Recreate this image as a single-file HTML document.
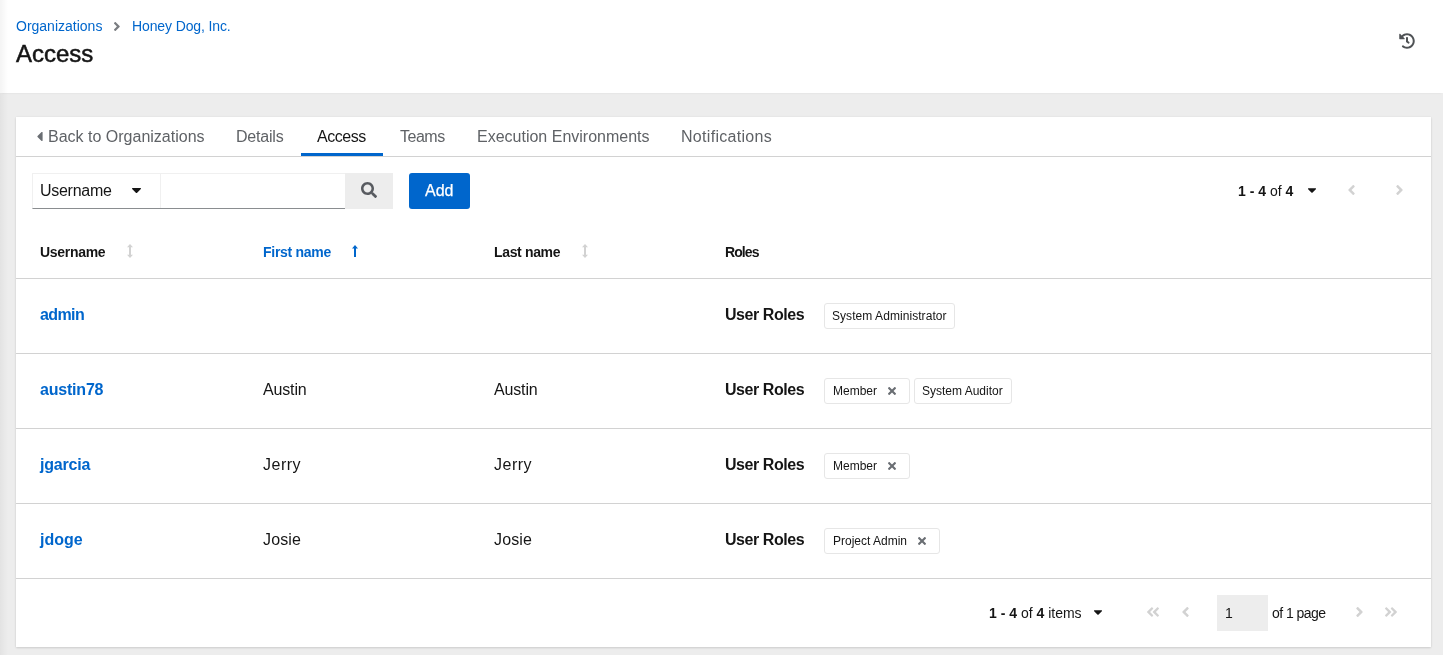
<!DOCTYPE html>
<html><head><meta charset="utf-8">
<style>
*{box-sizing:border-box;margin:0;padding:0}
html,body{width:1443px;height:655px;overflow:hidden;background:#ededed;font-family:"Liberation Sans",sans-serif;color:#151515}
.a{position:absolute;white-space:pre;line-height:1;will-change:transform}
#hdr{position:absolute;left:0;top:0;width:1443px;height:93px;background:#fff;box-shadow:0 2px 2px -2px rgba(3,3,3,.08)}
#lshadow{position:absolute;left:0;top:0;width:8px;height:655px;background:linear-gradient(to right,rgba(0,0,0,.045),rgba(0,0,0,0))}
#card{position:absolute;left:16px;top:117px;width:1415px;height:530px;background:#fff;box-shadow:0 1px 2px rgba(3,3,3,.12),0 0 2px rgba(3,3,3,.06)}
.blue{color:#0066cc}
.grey{color:#5f6266}
svg{position:absolute;display:block}
.hl{position:absolute;left:16px;width:1415px;height:1px;background:#d2d2d2}
.chip{position:absolute;height:26px;border:1px solid #e6e6e6;border-radius:3px;background:#fff}
</style></head><body>
<div id="hdr"></div>
<!-- breadcrumb -->
<div class="a blue" style="left:16px;top:19px;font-size:14px">Organizations</div>
<svg style="left:114px;top:22px" width="6" height="9" viewBox="32 96 200 320"><path fill="#7a7d81" d="M224.3 273l-136 136c-9.4 9.4-24.6 9.4-33.9 0l-22.6-22.6c-9.4-9.4-9.4-24.6 0-33.9l96.4-96.4-96.4-96.4c-9.4-9.4-9.4-24.6 0-33.9L54.3 103c9.4-9.4 24.6-9.4 33.9 0l136 136c9.5 9.4 9.5 24.6.1 34z"/></svg>
<div class="a blue" style="left:132px;top:19px;font-size:14px;letter-spacing:-0.12px">Honey Dog, Inc.</div>
<div class="a" style="left:16px;top:42px;font-size:24px;-webkit-text-stroke:0.5px #151515">Access</div>
<!-- history icon -->
<svg style="left:1399px;top:33px" width="16" height="16" viewBox="0 0 512 512"><path fill="#4f5255" d="M504 255.531c.253 136.64-111.18 248.372-247.82 248.468-59.015.042-113.223-20.53-155.822-54.911-11.077-8.94-11.905-25.541-1.839-35.607l11.267-11.267c8.609-8.609 22.353-9.551 31.891-1.984C173.062 425.135 212.781 440 256 440c101.705 0 184-82.311 184-184 0-101.705-82.311-184-184-184-48.814 0-93.149 18.969-126.068 49.932l50.754 50.754c10.08 10.08 2.941 27.314-11.313 27.314H24c-8.837 0-16-7.163-16-16V38.627c0-14.254 17.234-21.393 27.314-11.314l49.372 49.372C129.209 34.136 189.552 8 256 8c136.81 0 247.747 110.78 248 247.531zm-180.912 78.784l9.823-12.63c8.138-10.463 6.253-25.542-4.21-33.679L288 256.349V152c0-13.255-10.745-24-24-24h-16c-13.255 0-24 10.745-24 24v135.651l65.409 50.874c10.463 8.137 25.541 6.253 33.679-4.21z"/></svg>
<div id="lshadow"></div>
<div id="card"></div>

<!-- tabs -->
<div class="hl" style="top:156px"></div>
<div style="position:absolute;left:301px;top:153px;width:82px;height:3px;background:#0066cc"></div>
<svg style="left:37.4px;top:131.5px" width="6" height="9" viewBox="24 112 168 290"><path fill="#6a6e73" d="M192 127.338v257.324c0 17.818-21.543 26.741-34.142 14.142L29.196 270.142c-7.81-7.81-7.81-20.474 0-28.284l128.662-128.662c12.599-12.6 34.142-3.676 34.142 14.142z"/></svg>
<div class="a grey" style="left:48px;top:129px;font-size:16px">Back to Organizations</div>
<div class="a grey" style="left:236px;top:129px;font-size:16px;letter-spacing:-0.2px">Details</div>
<div class="a" style="left:317px;top:129px;font-size:16px;letter-spacing:-0.45px">Access</div>
<div class="a grey" style="left:400px;top:129px;font-size:16px;letter-spacing:-0.5px">Teams</div>
<div class="a grey" style="left:477px;top:129px;font-size:16px">Execution Environments</div>
<div class="a grey" style="left:681px;top:129px;font-size:16px;letter-spacing:0.3px">Notifications</div>

<!-- toolbar -->
<div style="position:absolute;left:32px;top:173px;width:129px;height:36px;border:1px solid #f0f0f0;border-bottom-color:#8a8d90"></div>
<div class="a" style="left:40px;top:183px;font-size:16px;letter-spacing:-0.28px">Username</div>
<svg style="left:132px;top:188px" width="9" height="5" viewBox="12 192 296 163"><path fill="#151515" d="M31.3 192h257.3c17.8 0 26.7 21.5 14.1 34.1L174.1 354.8c-7.8 7.8-20.5 7.8-28.3 0L17.2 226.1C4.6 213.5 13.5 192 31.3 192z"/></svg>
<div style="position:absolute;left:160px;top:173px;width:185px;height:36px;border:1px solid #f0f0f0;border-left:0;border-right:0;border-bottom-color:#8a8d90"></div>
<div style="position:absolute;left:345px;top:173px;width:48px;height:36px;background:#ededed"></div>
<svg style="left:361px;top:182px" width="16" height="16" viewBox="0 0 512 512"><path fill="#585b60" d="M505 442.7L405.3 343c-4.5-4.5-10.6-7-17-7H372c27.6-35.3 44-79.7 44-128C416 93.1 322.9 0 208 0S0 93.1 0 208s93.1 208 208 208c48.3 0 92.7-16.4 128-44v16.3c0 6.4 2.5 12.5 7 17l99.7 99.7c9.4 9.4 24.6 9.4 33.9 0l28.3-28.3c9.4-9.4 9.4-24.6.1-34zM208 336c-70.7 0-128-57.2-128-128 0-70.7 57.2-128 128-128 70.7 0 128 57.2 128 128 0 70.7-57.2 128-128 128z"/></svg>
<div style="position:absolute;left:409px;top:173px;width:61px;height:36px;background:#0066cc;border-radius:3px"></div>
<div class="a" style="left:425px;top:183px;font-size:16px;color:#fff;-webkit-text-stroke:0.25px #fff">Add</div>

<!-- top pagination -->
<div class="a" style="left:1238px;top:184px;font-size:14px"><b>1 - 4</b> of <b>4</b></div>
<svg style="left:1308px;top:188px" width="8" height="5" viewBox="12 192 296 163"><path fill="#151515" d="M31.3 192h257.3c17.8 0 26.7 21.5 14.1 34.1L174.1 354.8c-7.8 7.8-20.5 7.8-28.3 0L17.2 226.1C4.6 213.5 13.5 192 31.3 192z"/></svg>
<svg style="left:1348px;top:185px" width="7" height="10" viewBox="24 96 208 320"><path fill="#d2d2d2" d="M31.7 239l136-136c9.4-9.4 24.6-9.4 33.9 0l22.6 22.6c9.4 9.4 9.4 24.6 0 33.9L127.9 256l96.4 96.4c9.4 9.4 9.4 24.6 0 33.9L201.7 409c-9.4 9.4-24.6 9.4-33.9 0l-136-136c-9.5-9.4-9.5-24.6-.1-34z"/></svg>
<svg style="left:1396px;top:185px" width="7" height="10" viewBox="24 96 208 320"><path fill="#d2d2d2" d="M224.3 273l-136 136c-9.4 9.4-24.6 9.4-33.9 0l-22.6-22.6c-9.4-9.4-9.4-24.6 0-33.9l96.4-96.4-96.4-96.4c-9.4-9.4-9.4-24.6 0-33.9L54.3 103c9.4-9.4 24.6-9.4 33.9 0l136 136c9.5 9.4 9.5 24.6.1 34z"/></svg>

<!-- table header -->
<div class="a" style="left:40px;top:245px;font-size:14px;font-weight:bold;letter-spacing:-0.3px">Username</div>
<svg style="left:127px;top:244px" width="6" height="14" viewBox="0 0 6 14"><path fill="#d2d2d2" d="M3 0 L6 3.3 L4 3.3 L4 10.7 L6 10.7 L3 14 L0 10.7 L2 10.7 L2 3.3 L0 3.3 Z"/></svg>
<div class="a blue" style="left:263px;top:245px;font-size:14px;font-weight:bold;letter-spacing:-0.28px">First name</div>
<svg style="left:352px;top:245px" width="6" height="12" viewBox="0 0 6 12"><path fill="#0066cc" d="M3 0 L6 3.4 L4 3.4 L4 12 L2 12 L2 3.4 L0 3.4 Z"/></svg>
<div class="a" style="left:494px;top:245px;font-size:14px;font-weight:bold;letter-spacing:-0.35px">Last name</div>
<svg style="left:582px;top:244px" width="6" height="14" viewBox="0 0 6 14"><path fill="#d2d2d2" d="M3 0 L6 3.3 L4 3.3 L4 10.7 L6 10.7 L3 14 L0 10.7 L2 10.7 L2 3.3 L0 3.3 Z"/></svg>
<div class="a" style="left:725px;top:245px;font-size:14px;font-weight:bold;letter-spacing:-0.9px">Roles</div>
<div class="hl" style="top:278px"></div>

<!-- rows -->
<div class="a blue" style="left:40px;top:307px;font-size:16px;font-weight:bold;letter-spacing:-0.6px">admin</div>
<div class="a" style="left:725px;top:307px;font-size:16px;font-weight:bold;letter-spacing:-0.45px">User Roles</div>
<div class="chip" style="left:824px;top:303px;width:131px"></div>
<div class="a" style="left:832px;top:310px;font-size:12px;letter-spacing:0.06px">System Administrator</div>
<div class="hl" style="top:353px"></div>

<div class="a blue" style="left:40px;top:382px;font-size:16px;font-weight:bold;letter-spacing:-0.2px">austin78</div>
<div class="a" style="left:263px;top:382px;font-size:16px;letter-spacing:-0.15px">Austin</div>
<div class="a" style="left:494px;top:382px;font-size:16px;letter-spacing:-0.15px">Austin</div>
<div class="a" style="left:725px;top:382px;font-size:16px;font-weight:bold;letter-spacing:-0.45px">User Roles</div>
<div class="chip" style="left:824px;top:378px;width:86px"></div>
<div class="a" style="left:833px;top:385px;font-size:12px">Member</div>
<svg style="left:888px;top:387px" width="8" height="8" viewBox="0 80 352 352"><path fill="#6a6e73" d="M242.72 256l100.070-100.070c12.280-12.280 12.280-32.190 0-44.480l-22.240-22.240c-12.280-12.280-32.190-12.280-44.480 0L176 189.280 75.930 89.210c-12.280-12.280-32.190-12.280-44.480 0L9.210 111.450c-12.280 12.280-12.280 32.190 0 44.480L109.280 256 9.210 356.070c-12.280 12.280-12.280 32.190 0 44.480l22.240 22.240c12.280 12.280 32.200 12.280 44.480 0L176 322.720l100.070 100.070c12.280 12.280 32.200 12.280 44.480 0l22.240-22.240c12.280-12.280 12.280-32.190 0-44.480L242.720 256z"/></svg>
<div class="chip" style="left:914px;top:378px;width:98px"></div>
<div class="a" style="left:922px;top:385px;font-size:12px">System Auditor</div>
<div class="hl" style="top:428px"></div>

<div class="a blue" style="left:40px;top:457px;font-size:16px;font-weight:bold;letter-spacing:-0.2px">jgarcia</div>
<div class="a" style="left:263px;top:457px;font-size:16px;letter-spacing:0.5px">Jerry</div>
<div class="a" style="left:494px;top:457px;font-size:16px;letter-spacing:0.5px">Jerry</div>
<div class="a" style="left:725px;top:457px;font-size:16px;font-weight:bold;letter-spacing:-0.45px">User Roles</div>
<div class="chip" style="left:824px;top:453px;width:86px"></div>
<div class="a" style="left:833px;top:460px;font-size:12px">Member</div>
<svg style="left:888px;top:462px" width="8" height="8" viewBox="0 80 352 352"><path fill="#6a6e73" d="M242.72 256l100.070-100.070c12.280-12.280 12.280-32.190 0-44.480l-22.240-22.240c-12.280-12.280-32.190-12.280-44.480 0L176 189.280 75.930 89.210c-12.280-12.280-32.190-12.280-44.480 0L9.210 111.450c-12.280 12.280-12.280 32.190 0 44.480L109.280 256 9.210 356.070c-12.280 12.280-12.280 32.190 0 44.480l22.240 22.240c12.280 12.280 32.200 12.280 44.480 0L176 322.720l100.070 100.070c12.280 12.280 32.200 12.280 44.480 0l22.240-22.240c12.280-12.280 12.280-32.190 0-44.480L242.720 256z"/></svg>
<div class="hl" style="top:503px"></div>

<div class="a blue" style="left:40px;top:532px;font-size:16px;font-weight:bold">jdoge</div>
<div class="a" style="left:263px;top:532px;font-size:16px;letter-spacing:0.15px">Josie</div>
<div class="a" style="left:494px;top:532px;font-size:16px;letter-spacing:0.15px">Josie</div>
<div class="a" style="left:725px;top:532px;font-size:16px;font-weight:bold;letter-spacing:-0.45px">User Roles</div>
<div class="chip" style="left:824px;top:528px;width:116px"></div>
<div class="a" style="left:833px;top:535px;font-size:12px">Project Admin</div>
<svg style="left:918px;top:537px" width="8" height="8" viewBox="0 80 352 352"><path fill="#6a6e73" d="M242.72 256l100.070-100.070c12.280-12.280 12.280-32.190 0-44.480l-22.240-22.240c-12.280-12.280-32.190-12.280-44.480 0L176 189.280 75.930 89.210c-12.280-12.280-32.190-12.280-44.480 0L9.210 111.450c-12.280 12.280-12.280 32.190 0 44.480L109.280 256 9.210 356.070c-12.280 12.280-12.280 32.190 0 44.480l22.240 22.240c12.280 12.280 32.200 12.280 44.480 0L176 322.720l100.070 100.070c12.280 12.280 32.200 12.280 44.480 0l22.240-22.240c12.280-12.280 12.280-32.190 0-44.480L242.720 256z"/></svg>
<div class="hl" style="top:578px"></div>

<!-- footer pagination -->
<div class="a" style="left:989px;top:606px;font-size:14px"><b>1 - 4</b> of <b>4</b> items</div>
<svg style="left:1094px;top:610px" width="8" height="5" viewBox="12 192 296 163"><path fill="#151515" d="M31.3 192h257.3c17.8 0 26.7 21.5 14.1 34.1L174.1 354.8c-7.8 7.8-20.5 7.8-28.3 0L17.2 226.1C4.6 213.5 13.5 192 31.3 192z"/></svg>
<svg style="left:1147px;top:607px" width="12" height="10" viewBox="24 96 400 320"><path fill="#d2d2d2" d="M223.7 239l136-136c9.4-9.4 24.6-9.4 33.9 0l22.6 22.6c9.4 9.4 9.4 24.6 0 33.9L319.9 256l96.4 96.4c9.4 9.4 9.4 24.6 0 33.9L393.7 409c-9.4 9.4-24.6 9.4-33.9 0l-136-136c-9.5-9.4-9.5-24.6-.1-34zm-192 34l136 136c9.4 9.4 24.6 9.4 33.9 0l22.6-22.6c9.4-9.4 9.4-24.6 0-33.9L127.9 256l96.4-96.4c9.4-9.4 9.4-24.6 0-33.9L201.7 103c-9.4-9.4-24.6-9.4-33.9 0l-136 136c-9.5 9.4-9.5 24.6-.1 34z"/></svg>
<svg style="left:1182px;top:607px" width="7" height="10" viewBox="24 96 208 320"><path fill="#d2d2d2" d="M31.7 239l136-136c9.4-9.4 24.6-9.4 33.9 0l22.6 22.6c9.4 9.4 9.4 24.6 0 33.9L127.9 256l96.4 96.4c9.4 9.4 9.4 24.6 0 33.9L201.7 409c-9.4 9.4-24.6 9.4-33.9 0l-136-136c-9.5-9.4-9.5-24.6-.1-34z"/></svg>
<div style="position:absolute;left:1217px;top:595px;width:51px;height:36px;background:#ededed"></div>
<div class="a" style="left:1225px;top:606px;font-size:14px">1</div>
<div class="a" style="left:1272px;top:606px;font-size:14px;letter-spacing:-0.55px">of 1 page</div>
<svg style="left:1356px;top:607px" width="7" height="10" viewBox="24 96 208 320"><path fill="#d2d2d2" d="M224.3 273l-136 136c-9.4 9.4-24.6 9.4-33.9 0l-22.6-22.6c-9.4-9.4-9.4-24.6 0-33.9l96.4-96.4-96.4-96.4c-9.4-9.4-9.4-24.6 0-33.9L54.3 103c9.4-9.4 24.6-9.4 33.9 0l136 136c9.5 9.4 9.5 24.6.1 34z"/></svg>
<svg style="left:1385px;top:607px" width="12" height="10" viewBox="24 96 400 320"><path fill="#d2d2d2" d="M224.3 273l-136 136c-9.4 9.4-24.6 9.4-33.9 0l-22.6-22.6c-9.4-9.4-9.4-24.6 0-33.9l96.4-96.4-96.4-96.4c-9.4-9.4-9.4-24.6 0-33.9L54.3 103c9.4-9.4 24.6-9.4 33.9 0l136 136c9.5 9.4 9.5 24.6.1 34zm192-34l-136-136c-9.4-9.4-24.6-9.4-33.9 0l-22.6 22.6c-9.4 9.4-9.4 24.6 0 33.9l96.4 96.4-96.4 96.4c-9.4 9.4-9.4 24.6 0 33.9l22.6 22.6c9.4 9.4 24.6 9.4 33.9 0l136-136c9.4-9.2 9.4-24.4 0-33.8z"/></svg>
</body></html>
